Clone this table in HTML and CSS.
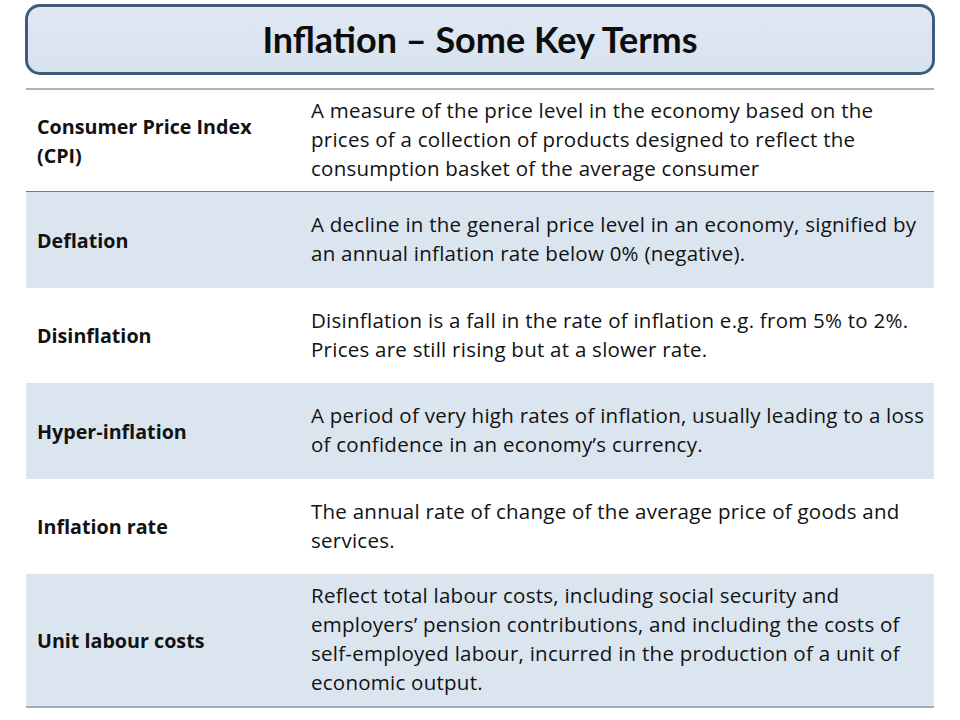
FILE: index.html
```html
<!DOCTYPE html>
<html>
<head>
<meta charset="utf-8">
<link rel="stylesheet" href="styles.css">
</head>
<body>
<div class="slide">
  <div class="title-box"><h1 class="title">Inflation – Some Key Terms</h1></div>
  <div class="terms">
    <div class="row row-white row-first" style="height:102px">
      <div class="term">Consumer Price Index<br>(CPI)</div>
      <div class="def">A measure of the price level in the economy based on the<br>prices of a collection of products designed to reflect the<br>consumption basket of the average consumer</div>
    </div>
    <div class="row row-blue" style="height:96px">
      <div class="term">Deflation</div>
      <div class="def">A decline in the general price level in an economy, signified by<br>an annual inflation rate below 0% (negative).</div>
    </div>
    <div class="row row-white" style="height:95px">
      <div class="term">Disinflation</div>
      <div class="def">Disinflation is a fall in the rate of inflation e.g. from 5% to 2%.<br>Prices are still rising but at a slower rate.</div>
    </div>
    <div class="row row-blue" style="height:96px">
      <div class="term">Hyper-inflation</div>
      <div class="def">A period of very high rates of inflation, usually leading to a loss<br>of confidence in an economy’s currency.</div>
    </div>
    <div class="row row-white" style="height:95px">
      <div class="term">Inflation rate</div>
      <div class="def">The annual rate of change of the average price of goods and<br>services.</div>
    </div>
    <div class="row row-blue row-last" style="height:134px">
      <div class="term">Unit labour costs</div>
      <div class="def">Reflect total labour costs, including social security and<br>employers’ pension contributions, and including the costs of<br>self-employed labour, incurred in the production of a unit of<br>economic output.</div>
    </div>
  </div>
</div>
</body>
</html>
```

FILE: styles.css
```css
* { box-sizing: border-box; }
html, body { margin: 0; padding: 0; background: #ffffff; }
body {
  width: 960px;
  height: 720px;
  overflow: hidden;
  font-family: "Open Sans", "Lato", "Liberation Sans", sans-serif;
  color: #121212;
}
.slide {
  padding-top: 4px;
}
.title-box {
  margin: 0 25px 0 25px;
  height: 71px;
  border: 3px solid #415b7b;
  border-radius: 15px;
  background: linear-gradient(to bottom, #dfe8f3, #d8e3f0);
  display: flex;
  align-items: center;
  justify-content: center;
}
.title {
  margin: 0;
  font-family: "Lato", "Open Sans", sans-serif;
  font-size: 36px;
  font-weight: 700;
  color: #0d0d0d;
  padding-bottom: 2px;
}
.terms {
  margin: 13px 26px 0 26px;
  border-top: 2px solid #a9b3bc;
}
.row {
  display: grid;
  grid-template-columns: 274px 1fr;
  align-items: center;
}
.row-white { background: #ffffff; }
.row-blue { background: #dbe5f0; }
.row-first { border-bottom: 1px solid #6f7a86; }
.row-last { border-bottom: 2px solid #9eaac2; }
.term {
  padding-left: 11px;
  font-size: 19.7px;
  font-weight: 700;
  line-height: 29px;
}
.def {
  padding-left: 11px;
  font-size: 20.5px;
  letter-spacing: 0.25px;
  line-height: 29px;
  white-space: nowrap;
  padding-bottom: 2px;
}
```
